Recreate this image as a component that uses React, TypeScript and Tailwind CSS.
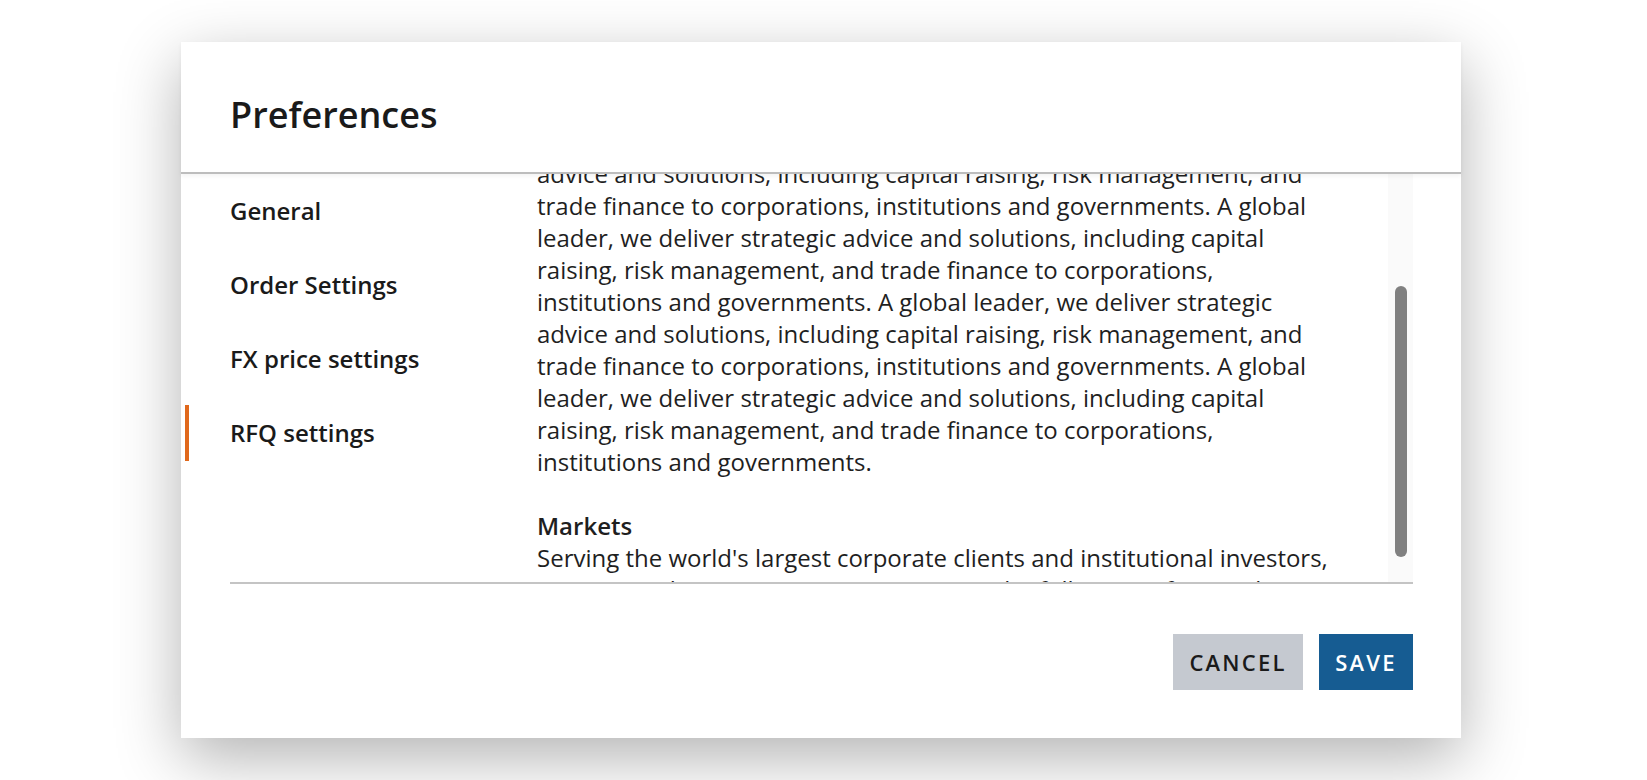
const navItems = ['General', 'Order Settings', 'FX price settings', 'RFQ settings'];

const bodyLines = [
  'advice and solutions, including capital raising, risk management, and',
  'trade finance to corporations, institutions and governments. A global',
  'leader, we deliver strategic advice and solutions, including capital',
  'raising, risk management, and trade finance to corporations,',
  'institutions and governments. A global leader, we deliver strategic',
  'advice and solutions, including capital raising, risk management, and',
  'trade finance to corporations, institutions and governments. A global',
  'leader, we deliver strategic advice and solutions, including capital',
  'raising, risk management, and trade finance to corporations,',
  'institutions and governments.',
];

const marketsLines = [
  "Serving the world's largest corporate clients and institutional investors,",
  'we support long-term investment across the full range of asset classes.',
];

export default function App() {
  const active = 'RFQ settings';

  return (
    <div
      className="flex h-[780px] w-full items-center bg-white pl-[181px] text-[#1f1f1f]"
      style={{ fontFamily: '"Open Sans", "Noto Sans", sans-serif' }}
    >
      <div className="flex h-[696px] w-[1280px] flex-col bg-white shadow-[0_20px_60px_rgba(0,0,0,0.3)]">
        {/* header */}
        <div className="relative z-10 h-[132px] shrink-0 border-b-2 border-[#bdbdbd] pl-[49px] pt-[55px] shadow-[0_2px_4px_rgba(0,0,0,0.05)]">
          <h1 className="text-[36px] leading-[36px] font-semibold text-[#1a1a1a]">Preferences</h1>
        </div>

        {/* body, scrolled part way down */}
        <div className="flex h-[408px] shrink-0 pr-[48px]">
          <nav className="flex w-[356px] shrink-0 flex-col gap-[18px] pt-[9px]">
            {navItems.map((item) => (
              <div key={item} className="flex h-[56px] items-center">
                <div className={`ml-[4px] h-full w-[4px] ${item === active ? 'bg-[#e0681c]' : ''}`} />
                <span className="ml-[41px] text-[24px] leading-[32px] font-semibold text-[#1a1a1a]">{item}</span>
              </div>
            ))}
          </nav>

          <div className="min-w-0 flex-1 overflow-hidden">
            <div className="-mt-[16px] text-[24px] leading-[32px] whitespace-nowrap">
              {bodyLines.map((line, i) => (
                <div key={i}>{line}</div>
              ))}
              <div className="mt-[32px] font-semibold">Markets</div>
              {marketsLines.map((line, i) => (
                <div key={i}>{line}</div>
              ))}
            </div>
          </div>

          <div className="w-[25px] shrink-0 bg-[#fafafa] pl-[7px] pt-[112px]">
            <div className="h-[271px] w-[12px] rounded-full bg-[#808080]" />
          </div>
        </div>

        <div className="ml-[49px] mr-[48px] h-[2px] shrink-0 bg-[#c4c4c4]" />

        {/* footer */}
        <div className="flex justify-end gap-[16px] pr-[48px] pt-[50px]">
          <button className="h-[56px] w-[130px] bg-[#c5c9d0] text-[22px] font-semibold tracking-[0.1em] text-[#1a1a1a]">
            CANCEL
          </button>
          <button className="h-[56px] w-[94px] bg-[#165c92] text-[22px] font-semibold tracking-[0.1em] text-white">
            SAVE
          </button>
        </div>
      </div>
    </div>
  );
}
